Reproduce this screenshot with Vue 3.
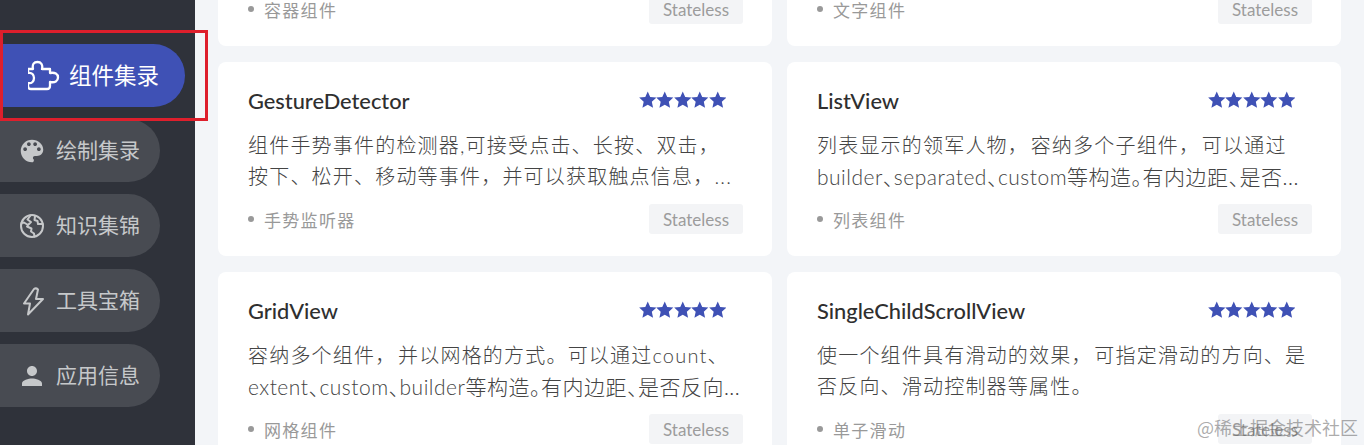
<script setup>
const navItems = [
  { label: '组件集录', icon: 'puzzle', active: true },
  { label: '绘制集录', icon: 'palette' },
  { label: '知识集锦', icon: 'globe' },
  { label: '工具宝箱', icon: 'bolt' },
  { label: '应用信息', icon: 'person' },
]
const cards = [
  { title: 'Container', lines: [], category: '容器组件' },
  { title: 'Text', lines: [], category: '文字组件' },
  {
    title: 'GestureDetector',
    lines: [
      { text: '组件手势事件的检测器,可接受点击、长按、双击，' },
      { text: '按下、松开、移动等事件，并可以获取触点信息，...' },
    ],
    category: '手势监听器',
  },
  {
    title: 'ListView',
    lines: [
      { text: '列表显示的领军人物， 容纳多个子组件， 可以通过' },
      { text: 'builder、separated、custom等构造。有内边距、是否...', mixed: true },
    ],
    category: '列表组件',
  },
  {
    title: 'GridView',
    lines: [
      { text: '容纳多个组件， 并以网格的方式。可以通过count、' },
      { text: 'extent、custom、builder等构造。有内边距、是否反向...', mixed: true },
    ],
    category: '网格组件',
  },
  {
    title: 'SingleChildScrollView',
    lines: [
      { text: '使一个组件具有滑动的效果， 可指定滑动的方向、是' },
      { text: '否反向、滑动控制器等属性。' },
    ],
    category: '单子滑动',
  },
]
</script>

<template>
  <div class="page">
    <aside class="sidebar">
      <div v-for="item in navItems" :key="item.label" class="nav-item" :class="{ active: item.active }">
        <svg v-if="item.icon === 'puzzle'" class="nav-icon" viewBox="13 5 32 32">
          <path class="line" d="M13 14H18C17 9 19 7 22.5 7C26 7 28 9.5 27 14H35V18C40 17 43 19 43 22.5C43 26 40 28 35 27V31Q35 34 32 34H16Q13 34 13 31V28C17 29 19 26 19 23C19 20 17 17 13 18Z" />
        </svg>
        <svg v-else-if="item.icon === 'palette'" class="nav-icon" viewBox="0 0 24 24">
          <path d="M12 3a9 9 0 0 0 0 18c.83 0 1.5-.67 1.5-1.5 0-.39-.15-.74-.39-1.01-.23-.26-.38-.61-.38-.99 0-.83.67-1.5 1.5-1.5H16c2.76 0 5-2.24 5-5 0-4.42-4.03-8-9-8zm-5.5 9c-.83 0-1.5-.67-1.5-1.5S5.67 9 6.5 9 8 9.67 8 10.5 7.33 12 6.5 12zm3-4C8.67 8 8 7.33 8 6.5S8.67 5 9.5 5s1.5.67 1.5 1.5S10.33 8 9.5 8zm5 0c-.83 0-1.5-.67-1.5-1.5S13.67 5 14.5 5s1.5.67 1.5 1.5S15.33 8 14.5 8zm3 4c-.83 0-1.5-.67-1.5-1.5S16.67 9 17.5 9s1.5.67 1.5 1.5-.67 1.5-1.5 1.5z" />
        </svg>
        <svg v-else-if="item.icon === 'globe'" class="nav-icon" viewBox="0 0 30 30">
          <circle class="line" cx="15" cy="15" r="11" />
          <path class="line" d="M13.5 4.5L10.5 8.5L14 11L11 14L7 11.5L4.5 12M10 15.5L14.5 17.5L14 20.5L17 22.5L17.5 25.5M18 5.5L17.5 9L20.5 10L21 13L25.5 13" />
        </svg>
        <svg v-else-if="item.icon === 'bolt'" class="nav-icon" viewBox="0 0 30 30">
          <path class="line" d="M17 3L7 17.5H13L11 28.5L26 13H19L21 3.5Q19 1.5 17 3Z" />
        </svg>
        <svg v-else class="nav-icon" viewBox="0 0 24 24">
          <path d="M12 12c2.21 0 4-1.79 4-4s-1.79-4-4-4-4 1.79-4 4 1.79 4 4 4zm0 2c-2.67 0-8 1.34-8 4v2h16v-2c0-2.66-5.33-4-8-4z" />
        </svg>
        <span class="nav-label">{{ item.label }}</span>
      </div>
    </aside>
    <main class="main">
      <div class="grid">
        <article v-for="card in cards" :key="card.title" class="card">
          <div class="head">
            <h3>{{ card.title }}</h3>
            <div class="stars">
              <svg v-for="n in 5" :key="n" viewBox="1 1 22 22"><path d="M12 1.5l3.1 6.9 7.7.9-5.7 5.1 1.6 7.6L12 18.2l-6.7 3.8 1.6-7.6-5.7-5.1 7.7-.9z" /></svg>
            </div>
          </div>
          <div class="desc">
            <div v-for="line in card.lines" :key="line.text" class="desc-line" :class="{ mixed: line.mixed }">{{ line.text }}</div>
          </div>
          <div class="foot">
            <span class="category"><i class="dot"></i>{{ card.category }}</span>
            <span class="tag">Stateless</span>
          </div>
        </article>
      </div>
    </main>
    <div class="highlight"></div>
    <div class="watermark">@稀土掘金技术社区</div>
  </div>
</template>

<style>
html, body { margin: 0; background: #f3f5f8; }
</style>

<style scoped>
.page {
  position: relative;
  display: flex;
  width: 1364px;
  height: 445px;
  overflow: hidden;
  background: #f3f5f8;
  font-family: Lato, "Noto Sans CJK SC", sans-serif;
}
.sidebar {
  flex: 0 0 195px;
  box-sizing: border-box;
  padding-top: 44px;
  display: flex;
  flex-direction: column;
  align-items: flex-start;
  gap: 12px;
  background: #2f323a;
}
.nav-item {
  box-sizing: border-box;
  width: 160px;
  height: 63px;
  padding-left: 17px;
  display: flex;
  align-items: center;
  gap: 9px;
  border-radius: 0 32px 32px 0;
  background: #484b52;
  color: #c6c8ca;
  font-size: 21px;
}
.nav-label { margin-top: -4px; }
.nav-item.active {
  width: 185px;
  padding-left: 28px;
  background: #3f51b5;
  color: #fff;
  font-size: 22.5px;
}
.nav-icon { width: 30px; height: 30px; flex: none; fill: currentColor; }
.active .nav-icon { width: 32px; height: 32px; }
.nav-icon .line {
  fill: none;
  stroke: currentColor;
  stroke-width: 2;
  stroke-linejoin: round;
  stroke-linecap: round;
}
.active .nav-icon .line { stroke-width: 2.3; }
.main { flex: 1; min-width: 0; padding: 0 23px; }
.grid {
  margin-top: -148px;
  display: grid;
  grid-template-columns: 554px 554px;
  grid-auto-rows: 194px;
  column-gap: 15px;
  row-gap: 16px;
}
.card {
  box-sizing: border-box;
  padding: 24px 29px 0 30px;
  border-radius: 8px;
  background: #fff;
  color: #333;
}
.head { display: flex; justify-content: space-between; align-items: center; height: 28px; }
h3 { margin: 0; font-size: 21.8px; font-weight: 500; color: #2f2f2f; }
.stars { display: flex; margin-right: 17px; }
.stars svg { width: 17.5px; height: 17.5px; fill: #3f51b5; }
.desc {
  margin-top: 16px;
  height: 62px;
  font-size: 20px;
  line-height: 31px;
  letter-spacing: 1.2px;
  word-spacing: -5px;
  color: #444;
  font-weight: 300;
}
.desc-line { white-space: nowrap; }
.desc-line.mixed {
  font-size: 21px;
  letter-spacing: 0.5px;
  font-feature-settings: "halt";
}
.foot { display: flex; justify-content: space-between; align-items: center; margin-top: 12px; }
.category { display: flex; align-items: center; gap: 10px; font-size: 17px; letter-spacing: 1.3px; color: #999; }
.dot { width: 6px; height: 6px; border-radius: 50%; background: #999; }
.tag {
  box-sizing: border-box;
  width: 94px;
  height: 30px;
  display: flex;
  align-items: center;
  justify-content: center;
  border-radius: 3px;
  background: #f3f4f6;
  color: #9c9c9c;
  font-size: 17px;
}
.highlight {
  position: absolute;
  left: 0;
  top: 30px;
  width: 208px;
  height: 91px;
  box-sizing: border-box;
  border: 3px solid #de1f2c;
}
.watermark {
  position: absolute;
  right: 6px;
  bottom: 5px;
  font-size: 18px;
  color: rgba(90, 90, 90, 0.5);
  white-space: nowrap;
  font-family: "Noto Sans CJK SC", sans-serif;
}
</style>
